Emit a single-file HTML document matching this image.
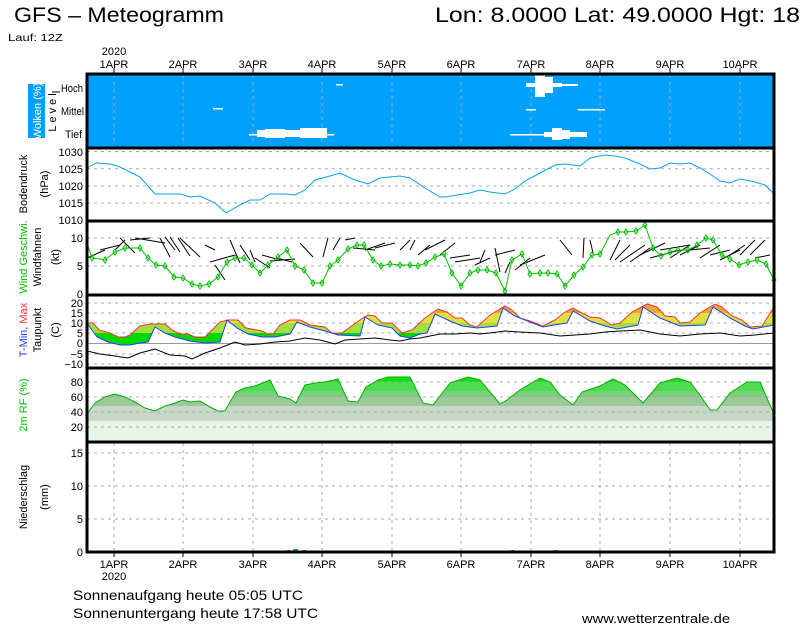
<!DOCTYPE html>
<html><head><meta charset="utf-8"><style>
html,body{margin:0;padding:0;background:#fff;}
svg{display:block;font-family:"Liberation Sans",sans-serif;}
</style></head><body>
<svg width="800" height="625" viewBox="0 0 800 625" xmlns="http://www.w3.org/2000/svg">
<defs>
<clipPath id="tclip"><polygon points="87,323 93,323 99,330 110,333 118,337 125,337 130,335 140,326 150,324 165,324 172,330 180,334 188,334 195,337 205,337 212,330 220,322 228,320 238,320 246,328 262,331 268,334 273,334 280,325 290,320 300,320 310,325 325,327 332,333 342,333 350,327 360,320 368,315 375,316 382,323 392,323 402,333 412,330 425,318 438,309 447,312 455,318 462,318 470,325 477,327 490,315 505,306 512,310 520,318 530,321 543,326 555,320 565,312 573,308 580,312 590,317 600,318 612,325 620,323 632,312 647,304 657,307 665,316 675,317 680,323 690,322 700,313 715,304 722,307 732,316 742,320 750,327 762,326 774,307 774,325 753,329 745,326 730,318 713,307 705,325 680,326 660,318 643,307 638,325 617,329 605,326 590,321 573,311 567,323 560,324 543,327 530,322 515,316 503,308 497,326 477,328 462,326 450,321 435,314 427,333 420,334 410,338 400,336 392,328 378,325 365,317 360,336 338,335 325,331 310,327 297,322 290,334 275,337 262,337 248,334 237,328 227,320 220,342 205,343 190,341 175,337 165,333 155,327 148,342 140,343 130,345 120,345 108,342 97,337 87,323"/></clipPath>
<clipPath id="rhclip"><polygon points="87,414 95,403 105,397 115,394 125,397 135,402 145,408 155,411 165,406 175,403 183,400 190,402 200,401 210,407 218,411 225,411 230,402 236,392 245,388 255,386 270,380 278,396 290,399 296,403 305,385 315,383 325,382 338,379 348,401 358,402 366,387 378,380 388,377 400,377 410,377 423,403 433,405 450,383 468,377 480,380 490,392 500,404 507,400 520,390 540,378 550,382 560,395 573,405 582,392 600,386 613,379 625,385 643,403 660,383 677,378 690,382 700,395 710,410 717,410 730,393 747,382 760,382 773,412 774,441 87,441"/></clipPath>
</defs>

<text x="14" y="22" font-size="21" textLength="210" lengthAdjust="spacingAndGlyphs">GFS – Meteogramm</text>
<text x="435" y="22" font-size="21" textLength="365" lengthAdjust="spacingAndGlyphs">Lon: 8.0000 Lat: 49.0000 Hgt: 18</text>
<text x="8" y="41" font-size="10" textLength="55" lengthAdjust="spacingAndGlyphs">Lauf: 12Z</text>

<g font-size="11" text-anchor="middle">
<text x="114" y="55">2020</text>
<text x="114" y="68">1APR</text><text x="183" y="68">2APR</text><text x="253" y="68">3APR</text><text x="322" y="68">4APR</text><text x="392" y="68">5APR</text><text x="461" y="68">6APR</text><text x="531" y="68">7APR</text><text x="600" y="68">8APR</text><text x="670" y="68">9APR</text><text x="740" y="68">10APR</text>
<text x="114" y="568">1APR</text><text x="183" y="568">2APR</text><text x="253" y="568">3APR</text><text x="322" y="568">4APR</text><text x="392" y="568">5APR</text><text x="461" y="568">6APR</text><text x="531" y="568">7APR</text><text x="600" y="568">8APR</text><text x="670" y="568">9APR</text><text x="740" y="568">10APR</text>
<text x="114" y="580">2020</text>
</g>

<rect x="87" y="74" width="687" height="74" fill="#00a0ff"/>
<g stroke="#aaa" stroke-width="1" stroke-dasharray="3,4">
<line x1="114" y1="75" x2="114" y2="143"/><line x1="183" y1="75" x2="183" y2="143"/><line x1="253" y1="75" x2="253" y2="143"/><line x1="322" y1="75" x2="322" y2="143"/><line x1="392" y1="75" x2="392" y2="143"/><line x1="461" y1="75" x2="461" y2="143"/><line x1="531" y1="75" x2="531" y2="143"/><line x1="600" y1="75" x2="600" y2="143"/><line x1="670" y1="75" x2="670" y2="143"/><line x1="740" y1="75" x2="740" y2="143"/>
</g>
<g fill="#fff">
<rect x="336" y="84" width="7" height="1.5"/>
<rect x="213" y="108" width="10" height="1.5"/>
<rect x="249" y="134" width="85" height="1.5"/>
<rect x="257" y="130" width="70" height="7"/>
<rect x="265" y="129" width="20" height="9"/>
<rect x="300" y="128" width="27" height="10"/>
<rect x="535" y="75" width="10" height="22"/>
<rect x="526" y="83" width="36" height="4"/>
<rect x="545" y="77" width="8" height="16"/>
<rect x="562" y="84" width="16" height="2"/>
<rect x="526" y="109" width="10" height="1.5"/>
<rect x="578" y="109" width="27" height="1.5"/>
<rect x="510" y="134" width="40" height="1.5"/>
<rect x="544" y="132" width="43" height="5"/>
<rect x="552" y="128" width="10" height="12"/>
<rect x="562" y="130" width="8" height="9"/>
</g>

<g stroke="#aaa" stroke-width="1" stroke-dasharray="3,4">
<line x1="87" y1="151.5" x2="774" y2="151.5"/><line x1="87" y1="168.7" x2="774" y2="168.7"/><line x1="87" y1="186" x2="774" y2="186"/><line x1="87" y1="203" x2="774" y2="203"/>
<line x1="87" y1="238" x2="774" y2="238"/><line x1="87" y1="266" x2="774" y2="266"/>
<line x1="87" y1="303" x2="774" y2="303"/><line x1="87" y1="313" x2="774" y2="313"/><line x1="87" y1="323" x2="774" y2="323"/><line x1="87" y1="333" x2="774" y2="333"/><line x1="87" y1="354" x2="774" y2="354"/><line x1="87" y1="364" x2="774" y2="364"/>
<line x1="87" y1="453" x2="774" y2="453"/><line x1="87" y1="486" x2="774" y2="486"/><line x1="87" y1="519" x2="774" y2="519"/>
<line x1="114" y1="443" x2="114" y2="550"/><line x1="183" y1="443" x2="183" y2="550"/><line x1="253" y1="443" x2="253" y2="550"/><line x1="322" y1="443" x2="322" y2="550"/><line x1="392" y1="443" x2="392" y2="550"/><line x1="461" y1="443" x2="461" y2="550"/><line x1="531" y1="443" x2="531" y2="550"/><line x1="600" y1="443" x2="600" y2="550"/><line x1="670" y1="443" x2="670" y2="550"/><line x1="740" y1="443" x2="740" y2="550"/>
</g>

<polyline fill="none" stroke="#0aa0f0" stroke-width="1" points="87,168 96,163 110,164 120,167 130,172 140,177 155,194 180,194 190,197 200,196 215,203 226,213 240,205 250,200 260,200 270,194 285,194 295,195 305,190 315,180 330,176 340,173 355,180 368,184 380,178 400,176 410,178 425,188 440,197 445,197 470,193 480,190 490,192 505,194 515,189 525,181 540,173 555,165 565,164 580,166 590,158 605,155 615,156 625,158 640,164 650,169 660,168 670,163 680,164 690,163 700,168 710,174 720,181 730,183 740,179 755,182 765,185 775,195"/>

<g stroke="#000" stroke-width="1">
<line x1="87" y1="258" x2="105" y2="250"/><line x1="100" y1="250" x2="120" y2="245"/><line x1="115" y1="250" x2="125" y2="240"/><line x1="120" y1="238" x2="135" y2="253"/><line x1="130" y1="240" x2="150" y2="238"/><line x1="135" y1="238" x2="165" y2="243"/><line x1="160" y1="238" x2="170" y2="257"/><line x1="165" y1="237" x2="175" y2="250"/><line x1="170" y1="237" x2="180" y2="252"/><line x1="178" y1="238" x2="190" y2="256"/><line x1="180" y1="238" x2="200" y2="257"/>
<line x1="205" y1="245" x2="215" y2="250"/><line x1="210" y1="262" x2="235" y2="255"/><line x1="215" y1="265" x2="225" y2="280"/><line x1="230" y1="240" x2="240" y2="263"/><line x1="240" y1="245" x2="250" y2="260"/><line x1="250" y1="250" x2="255" y2="262"/><line x1="255" y1="258" x2="270" y2="268"/><line x1="262" y1="255" x2="280" y2="260"/><line x1="270" y1="261" x2="295" y2="259"/><line x1="277" y1="258" x2="292" y2="262"/>
<line x1="300" y1="243" x2="313" y2="257"/><line x1="323" y1="257" x2="328" y2="238"/><line x1="333" y1="250" x2="340" y2="238"/><line x1="345" y1="240" x2="355" y2="238"/><line x1="353" y1="248" x2="375" y2="250"/><line x1="365" y1="250" x2="385" y2="243"/><line x1="375" y1="248" x2="395" y2="243"/>
<line x1="400" y1="250" x2="410" y2="240"/><line x1="410" y1="250" x2="415" y2="240"/><line x1="418" y1="255" x2="430" y2="245"/><line x1="425" y1="250" x2="445" y2="240"/><line x1="440" y1="255" x2="455" y2="243"/><line x1="450" y1="258" x2="470" y2="255"/><line x1="455" y1="262" x2="480" y2="258"/><line x1="475" y1="265" x2="490" y2="258"/><line x1="480" y1="262" x2="485" y2="250"/><line x1="495" y1="248" x2="500" y2="272"/><line x1="495" y1="255" x2="515" y2="250"/><line x1="505" y1="273" x2="510" y2="262"/><line x1="515" y1="270" x2="530" y2="258"/><line x1="520" y1="265" x2="545" y2="255"/>
<line x1="560" y1="240" x2="572" y2="255"/><line x1="584" y1="238" x2="583" y2="258"/><line x1="590" y1="240" x2="593" y2="253"/><line x1="610" y1="260" x2="620" y2="240"/><line x1="615" y1="260" x2="630" y2="245"/><line x1="620" y1="262" x2="645" y2="245"/><line x1="630" y1="262" x2="650" y2="248"/><line x1="640" y1="255" x2="665" y2="243"/><line x1="650" y1="258" x2="680" y2="250"/><line x1="660" y1="250" x2="690" y2="245"/><line x1="670" y1="258" x2="690" y2="245"/><line x1="680" y1="255" x2="700" y2="245"/><line x1="690" y1="250" x2="710" y2="248"/><line x1="700" y1="258" x2="720" y2="245"/><line x1="710" y1="255" x2="730" y2="250"/><line x1="720" y1="260" x2="740" y2="250"/><line x1="730" y1="255" x2="745" y2="245"/><line x1="740" y1="255" x2="755" y2="240"/><line x1="750" y1="255" x2="765" y2="240"/><line x1="755" y1="258" x2="770" y2="255"/>
</g>
<polyline fill="none" stroke="#00c000" stroke-width="1" points="87,243 92,258 100,259 105,260 115,252 120,250 125,248 135,248 140,248 148,258 156,265 165,266 174,277 183,278 192,284 200,286 209,284 218,277 227,262 235,258 244,258 252,265 260,273 268,265 278,257 287,250 295,266 304,270 313,283 322,283 330,266 338,260 348,249 357,245 364,245 373,260 381,266 390,264 400,265 410,265 418,266 426,263 435,257 444,254 452,273 461,286 470,273 478,270 487,270 496,273 505,291 512,260 522,254 530,274 540,273 548,273 557,274 565,286 574,275 583,267 592,255 600,254 610,235 618,232 626,232 636,231 645,225 653,248 661,256 670,252 678,250 688,250 697,245 706,238 713,240 722,255 730,259 739,265 748,262 757,260 766,264 774,280"/>
<g fill="none" stroke="#00c000" stroke-width="1">
<path d="M92,255l2,3-2,3-2-3zM105,257l2,3-2,3-2-3zM115,249l2,3-2,3-2-3zM125,245l2,3-2,3-2-3zM140,245l2,3-2,3-2-3zM148,255l2,3-2,3-2-3zM156,262l2,3-2,3-2-3zM165,263l2,3-2,3-2-3zM174,274l2,3-2,3-2-3zM183,275l2,3-2,3-2-3zM192,281l2,3-2,3-2-3zM200,283l2,3-2,3-2-3zM209,281l2,3-2,3-2-3zM218,274l2,3-2,3-2-3zM227,259l2,3-2,3-2-3zM235,255l2,3-2,3-2-3zM244,255l2,3-2,3-2-3zM252,262l2,3-2,3-2-3zM260,270l2,3-2,3-2-3zM268,262l2,3-2,3-2-3zM278,254l2,3-2,3-2-3zM287,247l2,3-2,3-2-3zM295,263l2,3-2,3-2-3zM304,267l2,3-2,3-2-3zM313,280l2,3-2,3-2-3zM322,280l2,3-2,3-2-3zM330,263l2,3-2,3-2-3zM338,257l2,3-2,3-2-3zM348,246l2,3-2,3-2-3zM357,242l2,3-2,3-2-3zM364,242l2,3-2,3-2-3zM373,257l2,3-2,3-2-3zM381,263l2,3-2,3-2-3zM390,261l2,3-2,3-2-3zM400,262l2,3-2,3-2-3zM410,262l2,3-2,3-2-3zM418,263l2,3-2,3-2-3zM426,260l2,3-2,3-2-3zM435,254l2,3-2,3-2-3zM444,251l2,3-2,3-2-3zM452,270l2,3-2,3-2-3zM461,283l2,3-2,3-2-3zM470,270l2,3-2,3-2-3zM478,267l2,3-2,3-2-3zM487,267l2,3-2,3-2-3zM496,270l2,3-2,3-2-3zM505,288l2,3-2,3-2-3zM512,257l2,3-2,3-2-3zM522,251l2,3-2,3-2-3zM530,271l2,3-2,3-2-3zM540,270l2,3-2,3-2-3zM548,270l2,3-2,3-2-3zM557,271l2,3-2,3-2-3zM565,283l2,3-2,3-2-3zM574,272l2,3-2,3-2-3zM583,264l2,3-2,3-2-3zM592,252l2,3-2,3-2-3zM600,251l2,3-2,3-2-3zM618,229l2,3-2,3-2-3zM626,229l2,3-2,3-2-3zM636,228l2,3-2,3-2-3zM645,222l2,3-2,3-2-3zM653,245l2,3-2,3-2-3zM661,253l2,3-2,3-2-3zM670,249l2,3-2,3-2-3zM678,247l2,3-2,3-2-3zM688,247l2,3-2,3-2-3zM697,242l2,3-2,3-2-3zM706,235l2,3-2,3-2-3zM713,237l2,3-2,3-2-3zM722,252l2,3-2,3-2-3zM730,256l2,3-2,3-2-3zM739,262l2,3-2,3-2-3zM748,259l2,3-2,3-2-3zM757,257l2,3-2,3-2-3zM766,261l2,3-2,3-2-3zM774,277l2,3-2,3-2-3z"/>
</g>

<line x1="87" y1="343.5" x2="774" y2="343.5" stroke="#999" stroke-width="1"/>
<g clip-path="url(#tclip)">
<rect x="87" y="333" width="687" height="20" fill="#00d800"/>
<rect x="87" y="323" width="687" height="10" fill="#a0e040"/>
<rect x="87" y="313" width="687" height="10" fill="#e0e040"/>
<rect x="87" y="296" width="687" height="17" fill="#e8a830"/>
</g>
<polyline fill="none" stroke="#ff3030" stroke-width="1" points="87,323 93,323 99,330 110,333 118,337 125,337 130,335 140,326 150,324 165,324 172,330 180,334 188,334 195,337 205,337 212,330 220,322 228,320 238,320 246,328 262,331 268,334 273,334 280,325 290,320 300,320 310,325 325,327 332,333 342,333 350,327 360,320 368,315 375,316 382,323 392,323 402,333 412,330 425,318 438,309 447,312 455,318 462,318 470,325 477,327 490,315 505,306 512,310 520,318 530,321 543,326 555,320 565,312 573,308 580,312 590,317 600,318 612,325 620,323 632,312 647,304 657,307 665,316 675,317 680,323 690,322 700,313 715,304 722,307 732,316 742,320 750,327 762,326 774,307"/>
<polyline fill="none" stroke="#2040ff" stroke-width="1" points="87,323 97,337 108,342 120,345 130,345 140,343 148,342 155,327 165,333 175,337 190,341 205,343 220,342 227,320 237,328 248,334 262,337 275,337 290,334 297,322 310,327 325,331 338,335 360,336 365,317 378,325 392,328 400,336 410,338 420,334 427,333 435,314 450,321 462,326 477,328 497,326 503,308 515,316 530,322 543,327 560,324 567,323 573,311 590,321 605,326 617,329 638,325 643,307 660,318 680,326 705,325 713,307 730,318 745,326 753,329 774,325"/>
<polyline fill="none" stroke="#000" stroke-width="1" points="87,351 100,354 115,356 128,358 140,353 155,349 170,355 185,356 192,359 205,353 220,348 235,342 245,345 260,344 275,342 290,341 305,338 320,340 335,344 345,340 360,339 375,338 390,340 400,341 410,339 420,338 440,334 455,334 470,333 480,334 490,333 505,331 520,332 540,333 560,336 575,335 590,334 605,332 620,331 640,330 660,334 680,336 700,334 720,333 740,336 755,335 774,333"/>

<rect x="87" y="421" width="687" height="20" fill="#e8f4e8"/>
<g clip-path="url(#rhclip)">
<rect x="87" y="406" width="687" height="15" fill="#c8d8c8"/>
<rect x="87" y="397" width="687" height="9" fill="#9cc89c"/>
<rect x="87" y="391" width="687" height="6" fill="#78d078"/>
<rect x="87" y="382" width="687" height="9" fill="#50dc50"/>
<rect x="87" y="368" width="687" height="14" fill="#10e010"/>
</g>
<g stroke="#aaa" stroke-width="1" stroke-dasharray="3,4">
<line x1="87" y1="382" x2="774" y2="382"/><line x1="87" y1="397" x2="774" y2="397"/><line x1="87" y1="412" x2="774" y2="412"/><line x1="87" y1="427" x2="774" y2="427"/>
</g>
<polyline fill="none" stroke="#00b000" stroke-width="1" points="87,414 95,403 105,397 115,394 125,397 135,402 145,408 155,411 165,406 175,403 183,400 190,402 200,401 210,407 218,411 225,411 230,402 236,392 245,388 255,386 270,380 278,396 290,399 296,403 305,385 315,383 325,382 338,379 348,401 358,402 366,387 378,380 388,377 400,377 410,377 423,403 433,405 450,383 468,377 480,380 490,392 500,404 507,400 520,390 540,378 550,382 560,395 573,405 582,392 600,386 613,379 625,385 643,403 660,383 677,378 690,382 700,395 710,410 717,410 730,393 747,382 760,382 773,412"/>

<rect x="287" y="550" width="3" height="2" fill="#e03030"/><rect x="293" y="549" width="5" height="2" fill="#20c020"/><rect x="303" y="550" width="3" height="2" fill="#e03030"/>
<rect x="511" y="550" width="3" height="2" fill="#e03030"/><rect x="553" y="550" width="5" height="1" fill="#20c020"/>

<g fill="none" stroke="#000" stroke-width="3">
<rect x="87" y="74" width="687" height="478"/>
<line x1="87" y1="148" x2="774" y2="148"/>
<line x1="87" y1="221" x2="774" y2="221"/>
<line x1="87" y1="295" x2="774" y2="295"/>
<line x1="87" y1="368" x2="774" y2="368"/>
<line x1="87" y1="442" x2="774" y2="442"/>
</g>
<g stroke="#000" stroke-width="1">
<line x1="114" y1="68" x2="114" y2="74"/><line x1="183" y1="68" x2="183" y2="74"/><line x1="253" y1="68" x2="253" y2="74"/><line x1="322" y1="68" x2="322" y2="74"/><line x1="392" y1="68" x2="392" y2="74"/><line x1="461" y1="68" x2="461" y2="74"/><line x1="531" y1="68" x2="531" y2="74"/><line x1="600" y1="68" x2="600" y2="74"/><line x1="670" y1="68" x2="670" y2="74"/><line x1="740" y1="68" x2="740" y2="74"/>
<line x1="114" y1="552" x2="114" y2="557"/><line x1="183" y1="552" x2="183" y2="557"/><line x1="253" y1="552" x2="253" y2="557"/><line x1="322" y1="552" x2="322" y2="557"/><line x1="392" y1="552" x2="392" y2="557"/><line x1="461" y1="552" x2="461" y2="557"/><line x1="531" y1="552" x2="531" y2="557"/><line x1="600" y1="552" x2="600" y2="557"/><line x1="670" y1="552" x2="670" y2="557"/><line x1="740" y1="552" x2="740" y2="557"/>
<line x1="52" y1="92" x2="60" y2="92"/>
</g>

<g font-size="11" text-anchor="end">
<text x="83" y="156">1030</text><text x="83" y="173">1025</text><text x="83" y="190">1020</text><text x="83" y="207">1015</text><text x="83" y="224">1010</text>
<text x="83" y="242">10</text><text x="83" y="270">5</text><text x="83" y="298">0</text>
<text x="83" y="307">20</text><text x="83" y="317">15</text><text x="83" y="327">10</text><text x="83" y="337">5</text><text x="83" y="347">0</text><text x="83" y="358">−5</text><text x="83" y="368">−10</text>
<text x="83" y="386">80</text><text x="83" y="401">60</text><text x="83" y="416">40</text><text x="83" y="431">20</text>
<text x="83" y="457">15</text><text x="83" y="490">10</text><text x="83" y="523">5</text><text x="83" y="556">0</text>
</g>
<g font-size="11">
<text x="61" y="92" textLength="22" lengthAdjust="spacingAndGlyphs">Hoch</text><text x="61" y="115" textLength="23" lengthAdjust="spacingAndGlyphs">Mittel</text><text x="65" y="138" textLength="17" lengthAdjust="spacingAndGlyphs">Tief</text>
</g>

<rect x="28" y="84" width="17" height="54" fill="#00a0ff"/>
<g font-size="11" text-anchor="middle">
<text transform="translate(41,111) rotate(-90)" fill="#fff">Wolken (%)</text>
<text transform="translate(56,111) rotate(-90)" letter-spacing="3">Level</text>
<text transform="translate(27,184) rotate(-90)">Bodendruck</text>
<text transform="translate(48,184) rotate(-90)">(hPa)</text>
<text transform="translate(27,257) rotate(-90)" fill="#00c000">Wind Geschwi.</text>
<text transform="translate(41,257) rotate(-90)">Windfahnen</text>
<text transform="translate(59,257) rotate(-90)">(kt)</text>
<text transform="translate(27,330) rotate(-90)"><tspan fill="#2040ff">T-Min, </tspan><tspan fill="#ff3030">Max</tspan></text>
<text transform="translate(41,330) rotate(-90)">Taupunkt</text>
<text transform="translate(59,330) rotate(-90)">(C)</text>
<text transform="translate(27,405) rotate(-90)" fill="#00c000">2m  RF  (%)</text>
<text transform="translate(27,497) rotate(-90)">Niederschlag</text>
<text transform="translate(48,497) rotate(-90)">(mm)</text>
</g>

<g font-size="14">
<text x="73" y="600" textLength="230" lengthAdjust="spacingAndGlyphs">Sonnenaufgang heute 05:05 UTC</text>
<text x="73" y="618" textLength="245" lengthAdjust="spacingAndGlyphs">Sonnenuntergang heute 17:58 UTC</text>
<text x="582" y="623" font-size="13" textLength="148" lengthAdjust="spacingAndGlyphs">www.wetterzentrale.de</text>
</g>
</svg>
</body></html>
